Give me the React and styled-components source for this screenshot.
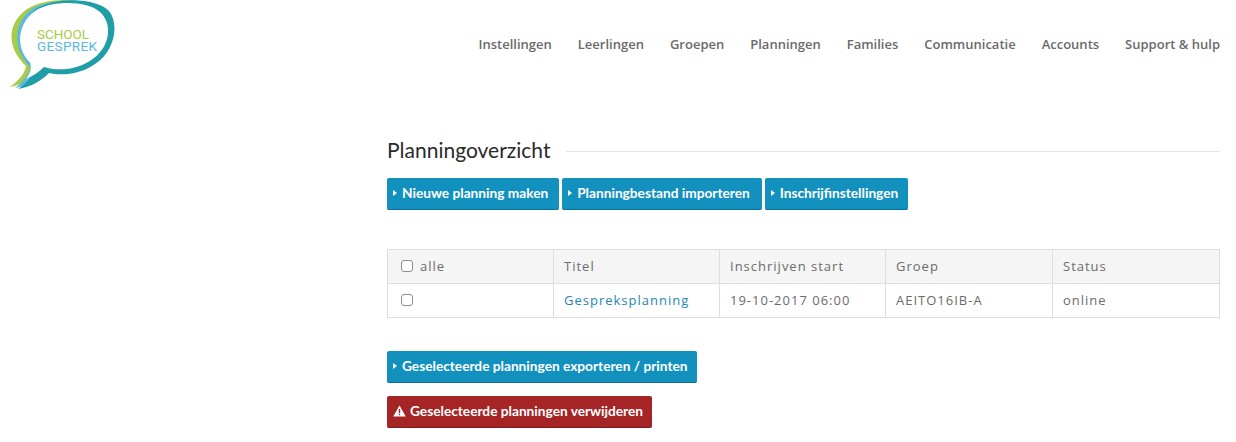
import React from "react";
import styled, { createGlobalStyle } from "styled-components";

const Global = createGlobalStyle`
  html, body { margin: 0; padding: 0; background: #fff; }
  body { font-family: "Open Sans", sans-serif; overflow: hidden; }
`;
const Page = styled.div`
  width: 1236px;
  height: 442px;
  overflow: hidden;
  display: flex;
  flex-direction: column;
`;
const Header = styled.header`
  height: 89px;
  display: flex;
  justify-content: space-between;
  padding: 0 16px 0 8px;
`;
const Logo = styled.svg`
  width: 110px;
  height: 92px;
  flex: none;
`;
const Nav = styled.nav`
  display: flex;
  gap: 26px;
  padding-top: 36px;
`;
const NavLink = styled.a`
  font-size: 13px;
  line-height: 17px;
  font-weight: 600;
  color: #6a6a6a;
  white-space: nowrap;
`;
const Main = styled.main`
  margin-left: 387px;
  width: 833px;
  display: flex;
  flex-direction: column;
  align-items: flex-start;
`;
const TitleRow = styled.div`
  width: 100%;
  height: 26px;
  margin-top: 48px;
  display: flex;
  align-items: center;
  gap: 16px;
`;
const Title = styled.h1`
  margin: 0;
  font-family: Lato, sans-serif;
  font-size: 21px;
  line-height: 26px;
  font-weight: 400;
  color: #2a2a2a;
  white-space: nowrap;
`;
const Rule = styled.div`
  flex: 1;
  height: 1px;
  background: #e6e6e6;
  margin-top: 2px;
`;
const Buttons = styled.div`
  display: flex;
  gap: 3px;
  margin-top: 15px;
`;
const Button = styled.button`
  display: flex;
  align-items: center;
  gap: ${(p) => (p.$danger ? 4 : 5)}px;
  height: 32px;
  padding: 0 ${(p) => p.$right || 10}px 2px 6px;
  border: 0;
  border-bottom: 1px solid ${(p) => (p.$danger ? "#7f1c1c" : "#0e6f98")};
  border-radius: 2px;
  background: ${(p) => (p.$danger ? "#a52527" : "#1291bf")};
  color: #fff;
  font-family: Lato, sans-serif;
  font-size: 13.7px;
  font-weight: 700;
  white-space: nowrap;
  margin-top: ${(p) => p.$top || 0}px;
`;
const Arrow = styled.span`
  width: 0;
  height: 0;
  border-left: 4px solid #fff;
  border-top: 3px solid transparent;
  border-bottom: 3px solid transparent;
`;
const Table = styled.table`
  width: 832px;
  margin-top: 39px;
  border-collapse: collapse;
  table-layout: fixed;
  font-size: 13px;
  letter-spacing: 1px;
  color: #6b6b6b;
`;
const Cell = styled.td`
  height: 34px;
  padding: 0 0 2px 10px;
  border: 1px solid #dedede;
  background: ${(p) => (p.$head ? "#f5f5f5" : "#fff")};
  white-space: nowrap;
  box-sizing: border-box;
`;
const FirstCellInner = styled.div`
  display: flex;
  align-items: center;
  gap: 7px;
  padding-left: 3px;
`;
const Check = styled.input.attrs({ type: "checkbox" })`
  width: 12px;
  height: 12px;
  margin: 0;
  appearance: none;
  border: 1px solid #8d8d8d;
  border-radius: 3px;
  background: #fff;
  box-sizing: border-box;
`;
const RowLink = styled.a`
  color: #1e86b4;
`;

const heads = ["Titel", "Inschrijven start", "Groep", "Status"];

export default function App() {
  return (
    <Page>
      <Global />
      <Header>
        <Logo viewBox="8 0 110 92">
          <path d="M26 66C7 48 6 24 27 9C46 -3 84 -3 99 9C112 21 106 48 88 60C74 70 56 72 42 69C33 78 22 85 10 87C18 81 25 74 26 66Z" fill="#a9cb48" />
          <path d="M30 67C13 50 12 24 32 9C50 -2 90 -3 104 10C117 23 111 50 92 62C78 72 60 74 46 71C38 80 28 86 15 88C23 82 29 75 30 67Z" fill="#5bb9e0" />
          <path d="M33 68C17 52 18 24 36 9C54 -3 96 -3 109 11C120 25 114 52 95 64C81 74 63 76 49 73C41 81 31 87 18 89C26 84 33 76 33 68Z" fill="#1f9ea8" />
          <path d="M30 63C14 46 18 21 38 9C56 0 88 1 100 12C113 24 110 46 94 58C80 69 60 72 44 67C39 72 33 76 26 79C30 74 32 68 30 63Z" fill="#fff" />
          <text x="37" y="38.5" fontFamily="Roboto, sans-serif" fontSize="13.5" fill="#a9cb48" textLength="52">SCHOOL</text>
          <text x="37" y="51" fontFamily="Roboto, sans-serif" fontSize="13.5" fill="#5bb9e0" textLength="60">GESPREK</text>
        </Logo>
        <Nav>
          {["Instellingen", "Leerlingen", "Groepen", "Planningen", "Families", "Communicatie", "Accounts", "Support & hulp"].map((n) => (
            <NavLink key={n}>{n}</NavLink>
          ))}
        </Nav>
      </Header>
      <Main>
        <TitleRow>
          <Title>Planningoverzicht</Title>
          <Rule />
        </TitleRow>
        <Buttons>
          <Button $right={11}><Arrow />Nieuwe planning maken</Button>
          <Button $right={12}><Arrow />Planningbestand importeren</Button>
          <Button><Arrow />Inschrijfinstellingen</Button>
        </Buttons>
        <Table>
          <colgroup>
            <col style={{ width: 166 }} />
            <col style={{ width: 166 }} />
            <col style={{ width: 166 }} />
            <col style={{ width: 167 }} />
            <col style={{ width: 167 }} />
          </colgroup>
          <tbody>
            <tr>
              <Cell $head><FirstCellInner><Check />alle</FirstCellInner></Cell>
              {heads.map((h) => <Cell $head key={h}>{h}</Cell>)}
            </tr>
            <tr>
              <Cell><FirstCellInner><Check /></FirstCellInner></Cell>
              <Cell><RowLink>Gespreksplanning</RowLink></Cell>
              <Cell>19-10-2017 06:00</Cell>
              <Cell>AEITO16IB-A</Cell>
              <Cell>online</Cell>
            </tr>
          </tbody>
        </Table>
        <Button $top={33}><Arrow />Geselecteerde planningen exporteren / printen</Button>
        <Button $danger $right={9} $top={13}>
          <svg width="13" height="12" viewBox="0 0 13 12">
            <path d="M6.5 0.5L12.8 11.5H0.2Z" fill="#fff" />
            <rect x="5.8" y="4" width="1.4" height="4" fill="#a52527" />
            <rect x="5.8" y="8.8" width="1.4" height="1.4" fill="#a52527" />
          </svg>
          Geselecteerde planningen verwijderen
        </Button>
      </Main>
    </Page>
  );
}
